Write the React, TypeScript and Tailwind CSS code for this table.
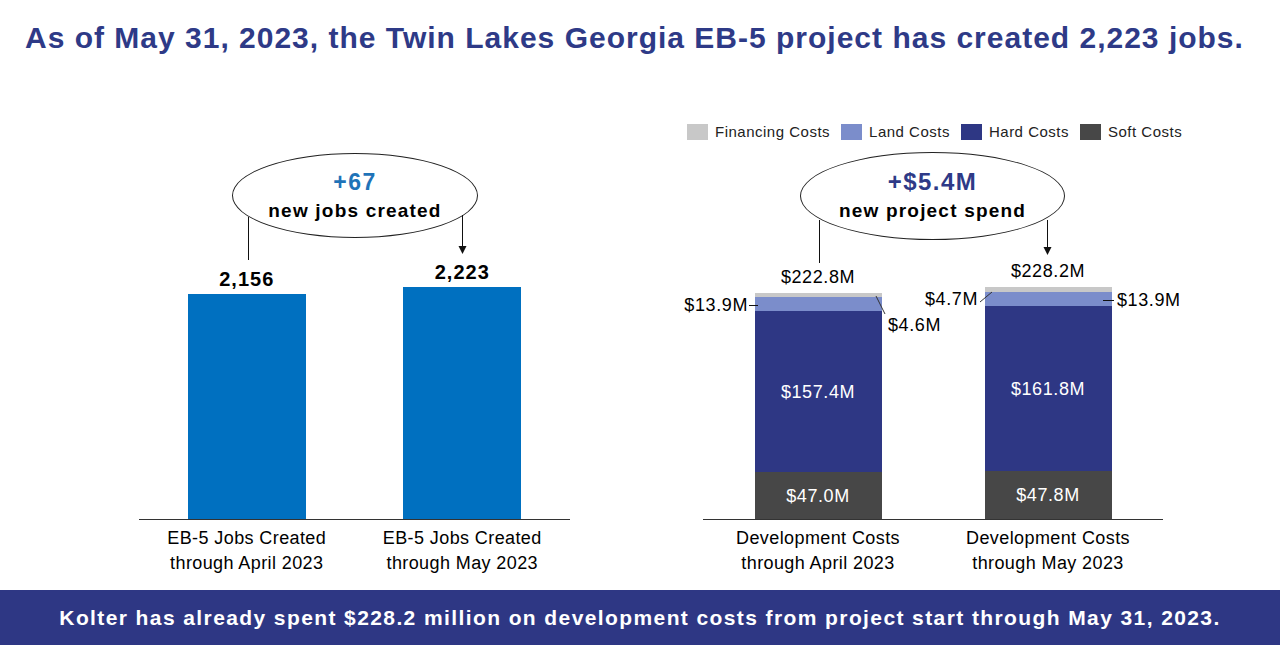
import React from 'react';

const NAVY = '#2e3784';

const legend = [
  { label: 'Financing Costs', color: 'bg-[#c8c8c8]' },
  { label: 'Land Costs', color: 'bg-[#7b8dcb]' },
  { label: 'Hard Costs', color: 'bg-[#2e3784]' },
  { label: 'Soft Costs', color: 'bg-[#474747]' },
];

const jobs = [
  { value: '2,156', height: 225, line1: 'EB-5 Jobs Created', line2: 'through April 2023' },
  { value: '2,223', height: 232, line1: 'EB-5 Jobs Created', line2: 'through May 2023' },
];

const costs = [
  { total: '$222.8M', fin: 4, land: 14, hard: 161, soft: 47, hardLabel: '$157.4M', softLabel: '$47.0M', line2: 'through April 2023' },
  { total: '$228.2M', fin: 5, land: 14, hard: 165, soft: 48, hardLabel: '$161.8M', softLabel: '$47.8M', line2: 'through May 2023' },
];

function Callout({ big, small, bigClass, className }: { big: string; small: string; bigClass: string; className: string }) {
  return (
    <div className={`absolute flex flex-col items-center justify-center rounded-[50%] border border-[#222] bg-white ${className}`}>
      <div className={`font-bold leading-[28px] tracking-[1.5px] ${bigClass}`}>{big}</div>
      <div className="mt-[2px] text-[19px] font-bold leading-[26px] tracking-[1.2px] text-black">{small}</div>
    </div>
  );
}

function JobsChart() {
  return (
    <div className="ml-[139px] flex w-[431px] flex-col">
      <div className="relative flex h-[445px] items-end border-b border-[#333]">
        {jobs.map((j) => (
          <div key={j.line2} className="flex flex-1 flex-col items-center">
            <div className="mb-[4px] text-[20px] font-bold leading-[22px] tracking-[1px] text-black">{j.value}</div>
            <div className="w-[118px] bg-[#0070c0]" style={{ height: j.height }} />
          </div>
        ))}
        <Callout
          big="+67"
          small="new jobs created"
          bigClass="text-[23px] text-[#1f73b8]"
          className="left-[93px] top-[78px] h-[85px] w-[246px]"
        />
        <svg className="pointer-events-none absolute inset-0 h-full w-full">
          <line x1="109.5" y1="142" x2="109.5" y2="185" stroke="#111" strokeWidth="1" />
          <line x1="323.5" y1="140" x2="323.5" y2="172" stroke="#111" strokeWidth="1" />
          <polygon points="319.5,171 327.5,171 323.5,179" fill="#111" />
        </svg>
      </div>
      <div className="flex pt-[6px]">
        {jobs.map((j) => (
          <div key={j.line2} className="flex-1 text-center text-[18px] leading-[25px] tracking-[0.4px] text-black">
            <div>{j.line1}</div>
            <div>{j.line2}</div>
          </div>
        ))}
      </div>
    </div>
  );
}

function CostsChart() {
  return (
    <div className="ml-[117px] flex w-[500px] flex-col">
      <div className="mt-[49px] flex h-[16px] items-center gap-[11px] text-[15px] leading-[16px] tracking-[0.5px] text-[#222]">
        {legend.map((l) => (
          <div key={l.label} className="flex items-center gap-[7px]">
            <div className={`h-[16px] w-[21px] ${l.color}`} />
            <span>{l.label}</span>
          </div>
        ))}
      </div>
      <div className="ml-[16px] flex w-[460px] flex-col">
        <div className="relative flex h-[380px] items-end border-b border-[#333] text-[18px] leading-[20px] tracking-[0.6px]">
          {costs.map((c) => (
            <div key={c.line2} className="flex flex-1 flex-col items-center">
              <div className="mb-[6px] text-black">{c.total}</div>
              <div className="flex w-[127px] flex-col">
                <div className="bg-[#c8c8c8]" style={{ height: c.fin }} />
                <div className="bg-[#7b8dcb]" style={{ height: c.land }} />
                <div className="flex items-center justify-center bg-[#2e3784] text-white" style={{ height: c.hard }}>
                  {c.hardLabel}
                </div>
                <div className="flex items-center justify-center bg-[#474747] text-white" style={{ height: c.soft }}>
                  {c.softLabel}
                </div>
              </div>
            </div>
          ))}
          <Callout
            big="+$5.4M"
            small="new project spend"
            bigClass="text-[24px] text-[#2e3a87]"
            className="left-[97px] top-[12px] h-[88px] w-[265px]"
          />
          <div className="absolute left-[-25px] top-[155px] w-[70px] text-right text-black">$13.9M</div>
          <div className="absolute left-[185px] top-[175px] text-black">$4.6M</div>
          <div className="absolute left-[195px] top-[149px] w-[80px] text-right text-black">$4.7M</div>
          <div className="absolute left-[414px] top-[150px] text-black">$13.9M</div>
          <svg className="pointer-events-none absolute inset-0 h-full w-full overflow-visible">
            <line x1="116.5" y1="80" x2="116.5" y2="123" stroke="#111" strokeWidth="1" />
            <line x1="344.5" y1="80" x2="344.5" y2="108" stroke="#111" strokeWidth="1" />
            <polygon points="340.5,107 348.5,107 344.5,115" fill="#111" />
            <line x1="46" y1="165.5" x2="55" y2="165.5" stroke="#111" strokeWidth="1" />
            <line x1="173" y1="156" x2="182" y2="174" stroke="#333" strokeWidth="1" />
            <line x1="277" y1="162" x2="289" y2="152" stroke="#333" strokeWidth="1" />
            <line x1="400" y1="160.5" x2="411" y2="160.5" stroke="#111" strokeWidth="1" />
          </svg>
        </div>
        <div className="flex pt-[6px]">
          {costs.map((c) => (
            <div key={c.line2} className="flex-1 text-center text-[18px] leading-[25px] tracking-[0.4px] text-black">
              <div>Development Costs</div>
              <div>{c.line2}</div>
            </div>
          ))}
        </div>
      </div>
    </div>
  );
}

export default function App() {
  return (
    <div className="flex h-[658px] w-[1280px] flex-col bg-white font-['Liberation_Sans',Arial,sans-serif]">
      <div className="flex h-[75px] items-center pl-[25px]">
        <h1 className="text-[30px] font-bold leading-none tracking-[1px] text-[#2e3a87]">
          As of May 31, 2023, the Twin Lakes Georgia EB-5 project has created 2,223 jobs.
        </h1>
      </div>
      <div className="flex h-[515px]">
        <JobsChart />
        <CostsChart />
      </div>
      <div
        className="flex h-[55px] items-center justify-center text-[21px] font-bold tracking-[1.4px] text-white"
        style={{ backgroundColor: NAVY }}
      >
        Kolter has already spent $228.2 million on development costs from project start through May 31, 2023.
      </div>
    </div>
  );
}
